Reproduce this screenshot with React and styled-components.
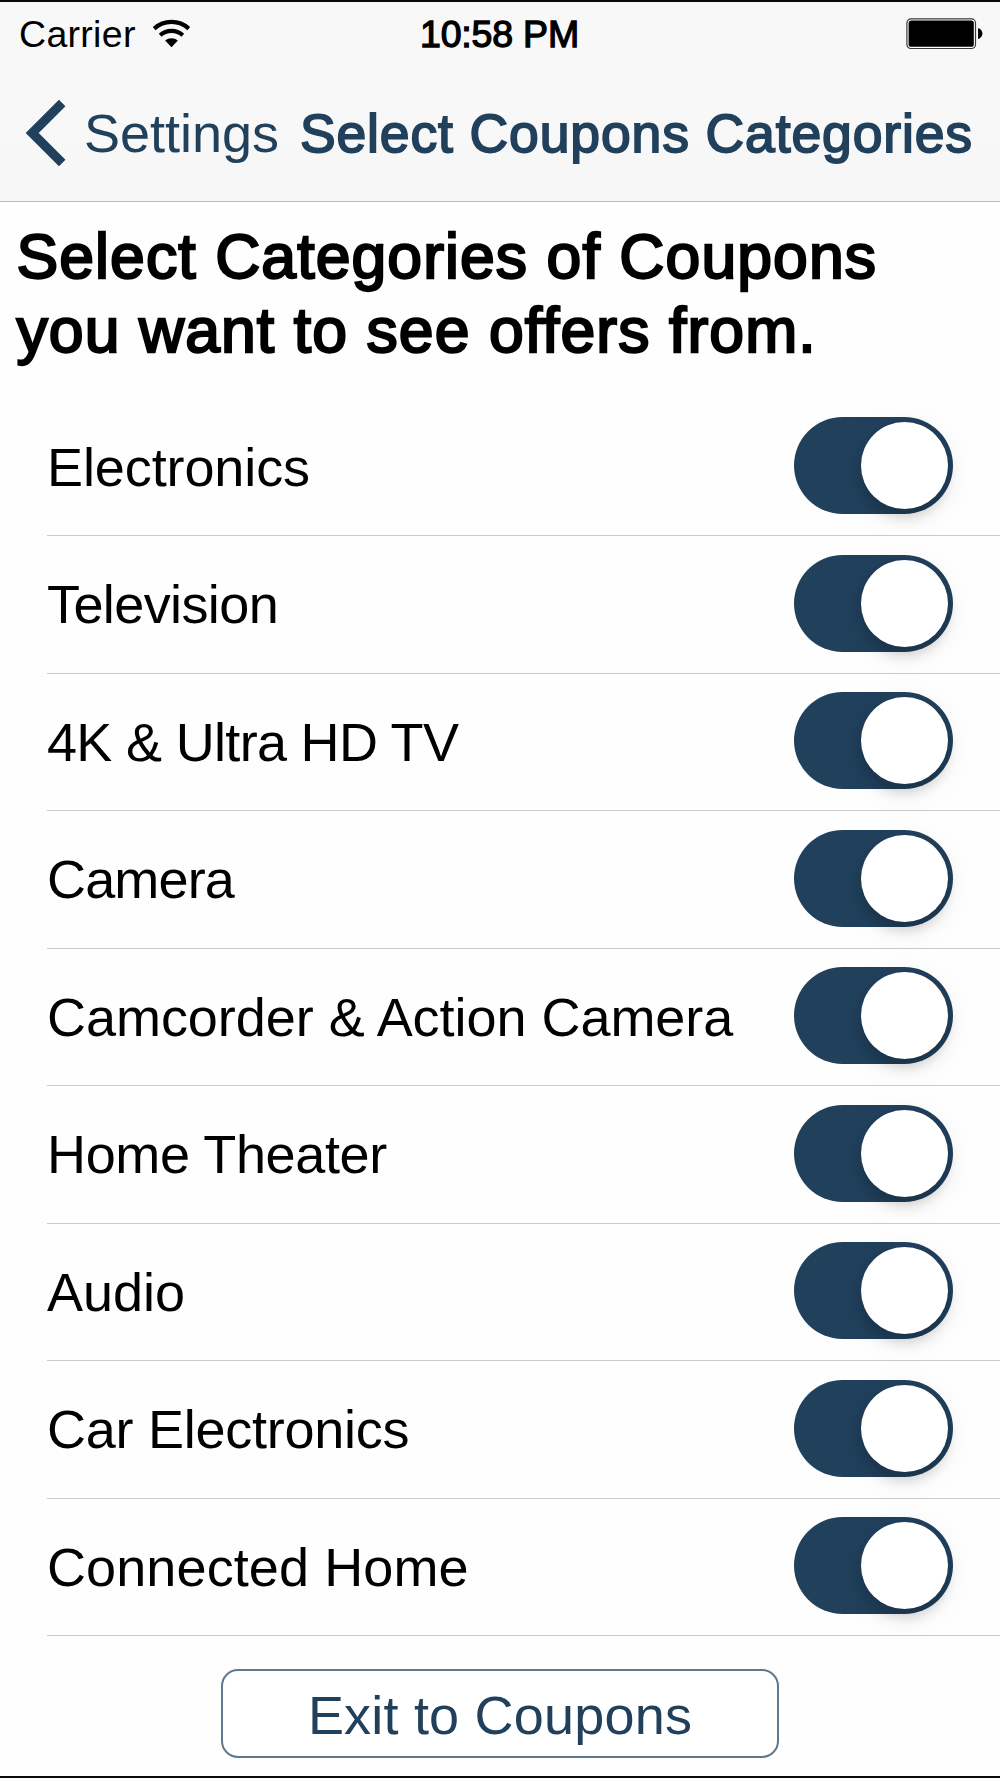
import { useState } from "react";
import styled, { createGlobalStyle } from "styled-components";

const CATEGORIES = [
  { name: "Electronics", tracking: -0.1 },
  { name: "Television", tracking: -0.6 },
  { name: "4K & Ultra HD TV", tracking: -0.68 },
  { name: "Camera", tracking: -0.85 },
  { name: "Camcorder & Action Camera", tracking: -0.04 },
  { name: "Home Theater", tracking: -0.36 },
  { name: "Audio", tracking: 0 },
  { name: "Car Electronics", tracking: -0.25 },
  { name: "Connected Home", tracking: 0.1 },
];

const WifiIcon = () => (
  <svg width="39" height="29" viewBox="0 0 39 29" fill="none">
    <path d="M2.2 9.6a25.9 25.9 0 0 1 34.6 0" stroke="#000" strokeWidth="4.2" />
    <path d="M8.2 16.2a17 17 0 0 1 22.6 0" stroke="#000" strokeWidth="4.2" />
    <path d="M13.1 21.6a9.6 9.6 0 0 1 12.8 0L19.5 28.2z" fill="#000" />
  </svg>
);

const BatteryIcon = () => (
  <svg width="78" height="32" viewBox="0 0 78 32">
    <rect x="0.9" y="0.9" width="68.6" height="29.6" rx="4" fill="#fff" stroke="#3a3a3a" strokeWidth="1.2" />
    <rect x="2.6" y="2.4" width="65.2" height="26.4" rx="2.6" fill="#000" />
    <path d="M72 10.2c2.6.4 4.4 2.6 4.4 5.4s-1.8 5-4.4 5.4z" fill="#000" />
  </svg>
);

const BackIcon = () => (
  <svg width="42" height="68" viewBox="0 0 42 68" fill="none">
    <path d="M38.2 4.1L8.2 34l30 29.9" stroke="#21405c" strokeWidth="9.2" />
  </svg>
);

const App = () => {
  const [selected, setSelected] = useState(CATEGORIES.map((c) => c.name));

  const toggle = (name) =>
    setSelected((prev) =>
      prev.includes(name) ? prev.filter((n) => n !== name) : [...prev, name]
    );

  return (
    <Screen>
      <GlobalStyle />
      <Header>
        <StatusBar>
          <Carrier>
            <span>Carrier</span>
            <WifiIcon />
          </Carrier>
          <Time>10:58 PM</Time>
          <Battery>
            <BatteryIcon />
          </Battery>
        </StatusBar>
        <NavBar>
          <BackButton>
            <BackIcon />
            <span>Settings</span>
          </BackButton>
          <NavTitle>Select Coupons Categories</NavTitle>
        </NavBar>
      </Header>
      <Intro>
        Select Categories of Coupons
        <br />
        you want to see offers from.
      </Intro>
      <List>
        {CATEGORIES.map(({ name, tracking }) => (
          <Row key={name}>
            <Label $tracking={tracking}>{name}</Label>
            <Switch
              role="switch"
              aria-checked={selected.includes(name)}
              $on={selected.includes(name)}
              onClick={() => toggle(name)}
            >
              <Knob />
            </Switch>
          </Row>
        ))}
      </List>
      <Footer>
        <ExitButton>Exit to Coupons</ExitButton>
      </Footer>
    </Screen>
  );
};

export default App;

const GlobalStyle = createGlobalStyle`
  * {
    box-sizing: border-box;
  }
  body {
    margin: 0;
    background: #fff;
  }
  button {
    padding: 0;
    border: 0;
    background: none;
    font: inherit;
    color: inherit;
  }
  svg {
    display: block;
    flex-shrink: 0;
  }
`;

const Screen = styled.div`
  display: flex;
  flex-direction: column;
  width: 1000px;
  height: 1778px;
  overflow: hidden;
  border-top: 2px solid #0a0a0a;
  border-bottom: 2px solid #0a0a0a;
  background: #fefefe;
  color: #000;
  font-family: "Liberation Sans", Arial, sans-serif;
  font-size: 54px;
  line-height: 62px;
  white-space: nowrap;
`;

const Header = styled.header`
  height: 200px;
  flex-shrink: 0;
  border-bottom: 1px solid #b9b9b9;
  background: linear-gradient(#f8f8f8 60%, #f6f6f6);
`;

const StatusBar = styled.div`
  display: grid;
  grid-template-columns: 1fr auto 1fr;
  height: 64px;
  padding: 11px 16px 0 19px;
  font-size: 37.5px;
  line-height: 43px;
`;

const Carrier = styled.div`
  display: flex;
  gap: 16.5px;
  letter-spacing: 0.3px;

  svg {
    margin-top: 6px;
  }
`;

const Time = styled.div`
  padding-right: 4px;
  letter-spacing: -0.2px;
  -webkit-text-stroke: 1.3px #000;
`;

const Battery = styled.div`
  display: flex;
  justify-content: flex-end;
  padding-top: 5px;
`;

const NavBar = styled.nav`
  display: flex;
  align-items: center;
  justify-content: space-between;
  height: 133px;
  padding: 0 27px 0 24px;
  color: #21405c;
`;

const BackButton = styled.button`
  display: flex;
  align-items: center;
  gap: 18px;

  span {
    padding-top: 1px;
  }
`;

const NavTitle = styled.h1`
  margin: 0;
  padding-top: 2px;
  font-size: 53.5px;
  font-weight: 400;
  letter-spacing: 0.87px;
  -webkit-text-stroke: 1.8px #21405c;
`;

const Intro = styled.h2`
  height: 196.5px;
  flex-shrink: 0;
  margin: 0;
  padding: 17px 0 0 16.5px;
  font-size: 62.5px;
  font-weight: 400;
  line-height: 74px;
  letter-spacing: 1.08px;
  -webkit-text-stroke: 2.3px #000;
`;

const List = styled.ul`
  margin: 0;
  padding: 0 0 0 47px;
  list-style: none;
`;

const Row = styled.li`
  display: flex;
  align-items: center;
  justify-content: space-between;
  height: 137.5px;
  padding: 0 47px 2px 0;
  border-bottom: 1px solid #cbcbcd;
`;

const Label = styled.span`
  padding-top: 2px;
  letter-spacing: ${({ $tracking }) => $tracking}px;
`;

const Switch = styled.button`
  display: flex;
  justify-content: ${({ $on }) => ($on ? "flex-end" : "flex-start")};
  width: 159px;
  height: 97px;
  padding: 5px;
  border-radius: 49px;
  background: ${({ $on }) => ($on ? "#21405c" : "#e5e5e5")};
`;

const Knob = styled.span`
  width: 87px;
  height: 87px;
  border-radius: 50%;
  background: #fff;
  box-shadow: 0 9px 12px rgba(0, 0, 0, 0.14), 0 6px 32px rgba(0, 0, 0, 0.08);
`;

const Footer = styled.footer`
  display: flex;
  justify-content: center;
  padding-top: 33px;
`;

const ExitButton = styled.button`
  width: 558px;
  height: 89px;
  padding-top: 2px;
  border: 2px solid #5f788d;
  border-radius: 17px;
  background: #fff;
  color: #21405c;
  letter-spacing: 0.2px;
`;
